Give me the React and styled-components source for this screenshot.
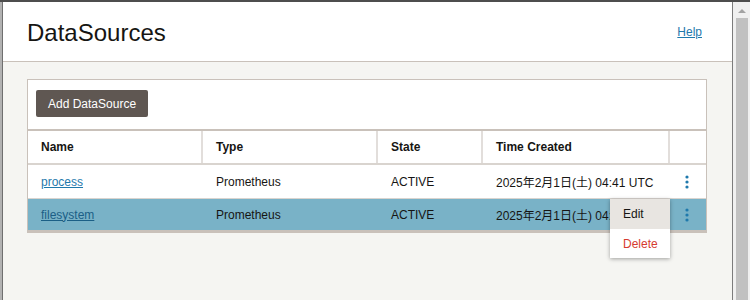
import React from "react";
import styled, { createGlobalStyle } from "styled-components";

const Global = createGlobalStyle`
  html, body { margin: 0; padding: 0; }
  body {
    width: 750px;
    height: 300px;
    overflow: hidden;
    font-family: "Liberation Sans", Arial, "Noto Sans CJK JP", sans-serif;
    background: #b4b4b4;
  }
`;

const Frame = styled.div`
  display: flex;
  height: 298px;
  border-top: 2px solid #4d4d4d;
  background: #b4b4b4;
`;

const LeftEdge = styled.div`
  width: 2px;
  background: #b2b2b2;
`;

const Dialog = styled.div`
  width: 729px;
  border-left: 1px solid #6f6f6f;
  border-right: 1px solid #7c7c7c;
  display: flex;
  flex-direction: column;
  background: #f5f5f2;
`;

const Header = styled.header`
  height: 59px;
  flex: none;
  background: #fff;
  border-bottom: 1px solid #c9c1ba;
  display: flex;
  align-items: center;
  justify-content: space-between;
  padding: 0 30px 0 24px;
`;

const Title = styled.h1`
  margin: 0;
  font-size: 24px;
  font-weight: 400;
  color: #161513;
  position: relative;
  top: 1px;
`;

const Link = styled.a`
  font-size: 12px;
  color: ${(p) => (p.$dark ? "#1b5f86" : "#1f79ac")};
  text-decoration: underline;
  cursor: pointer;
`;

const Body = styled.div`
  flex: 1;
  padding: 17px 25px 0 24px;
`;

const Panel = styled.section`
  background: #fff;
  border: 1px solid #c9c1ba;
  border-bottom: none;
  padding-top: 10px;
`;

const Toolbar = styled.div`
  display: flex;
  padding: 0 8px;
  margin-bottom: 12px;
`;

const Button = styled.button`
  height: 27px;
  padding: 0 12px;
  border: none;
  border-radius: 2px;
  background: #5f5752;
  color: #fff;
  font-family: inherit;
  font-size: 12px;
`;

const Table = styled.div`
  border-top: 2px solid #c9c1ba;
  border-bottom: 3px solid #c9c1ba;
  border-left: 1px solid #c9c1ba;
  border-right: 1px solid #c9c1ba;
  margin: 0 -1px;
`;

const Row = styled.div`
  display: grid;
  grid-template-columns: 175px 175px 105px 187px 1fr;
  height: ${(p) => p.$h}px;
  background: ${(p) => (p.$selected ? "#79b2c7" : "#fff")};
  border-bottom: ${(p) => (p.$last ? "none" : `${p.$line}px solid #d9d4cf`)};
`;

const HeadCell = styled.div`
  display: flex;
  align-items: center;
  padding-left: 13px;
  font-size: 12px;
  font-weight: 700;
  color: #161513;
  border-right: ${(p) => (p.$end ? "none" : "2px solid #e2dedb")};
`;

const Cell = styled.div`
  display: flex;
  align-items: center;
  padding-left: 13px;
  font-size: 12px;
  color: #161513;
  white-space: nowrap;
`;

const ActionCell = styled.div`
  display: flex;
  align-items: center;
  justify-content: center;
  padding-right: 2px;
  position: relative;
`;

const Kebab = styled.svg`
  width: 4px;
  height: 14px;
  display: block;
`;

const Menu = styled.div`
  position: absolute;
  right: 100%;
  top: 0;
  width: 60px;
  background: #fff;
  box-shadow: 0 1px 4px rgba(0, 0, 0, 0.35);
  z-index: 2;
`;

const MenuItem = styled.div`
  height: ${(p) => p.$h}px;
  display: flex;
  align-items: center;
  padding-left: 13px;
  font-size: 12px;
  color: ${(p) => (p.$danger ? "#d63b2f" : "#161513")};
  background: ${(p) => (p.$active ? "#e8e5e1" : "#fff")};
`;

const Scrollbar = styled.div`
  width: 17px;
  background: #f0f0f0;
  display: flex;
  flex-direction: column;
  align-items: center;
`;

const Arrow = styled.div`
  margin-top: 7px;
  width: 0;
  height: 0;
  border-left: 4px solid transparent;
  border-right: 4px solid transparent;
  border-bottom: 4px solid #a3a3a3;
`;

const Thumb = styled.div`
  margin-top: 5px;
  width: 12px;
  flex: 1;
  background: #c1c1c1;
`;

const KebabIcon = () => (
  <Kebab viewBox="0 0 4 14">
    <circle cx="2" cy="2" r="1.6" fill="#1f79ac" />
    <circle cx="2" cy="7" r="1.6" fill="#1f79ac" />
    <circle cx="2" cy="12" r="1.6" fill="#1f79ac" />
  </Kebab>
);

const rows = [
  { name: "process", type: "Prometheus", state: "ACTIVE", time: "2025年2月1日(土) 04:41 UTC" },
  { name: "filesystem", type: "Prometheus", state: "ACTIVE", time: "2025年2月1日(土) 04:41 UTC", selected: true },
];

export default function App() {
  return (
    <>
      <Global />
      <Frame>
        <LeftEdge />
        <Dialog>
          <Header>
            <Title>DataSources</Title>
            <Link>Help</Link>
          </Header>
          <Body>
            <Panel>
              <Toolbar>
                <Button>Add DataSource</Button>
              </Toolbar>
              <Table>
                <Row $h={32} $line={2}>
                  <HeadCell>Name</HeadCell>
                  <HeadCell>Type</HeadCell>
                  <HeadCell>State</HeadCell>
                  <HeadCell>Time Created</HeadCell>
                  <HeadCell $end />
                </Row>
                {rows.map((r, i) => (
                  <Row key={r.name} $h={i === 0 ? 33 : 31} $line={1} $selected={r.selected} $last={i === rows.length - 1}>
                    <Cell>
                      <Link $dark={r.selected}>{r.name}</Link>
                    </Cell>
                    <Cell>{r.type}</Cell>
                    <Cell>{r.state}</Cell>
                    <Cell>{r.time}</Cell>
                    <ActionCell>
                      <KebabIcon />
                      {r.selected && (
                        <Menu>
                          <MenuItem $h={30} $active>Edit</MenuItem>
                          <MenuItem $h={29} $danger>Delete</MenuItem>
                        </Menu>
                      )}
                    </ActionCell>
                  </Row>
                ))}
              </Table>
            </Panel>
          </Body>
        </Dialog>
        <Scrollbar>
          <Arrow />
          <Thumb />
        </Scrollbar>
      </Frame>
    </>
  );
}
